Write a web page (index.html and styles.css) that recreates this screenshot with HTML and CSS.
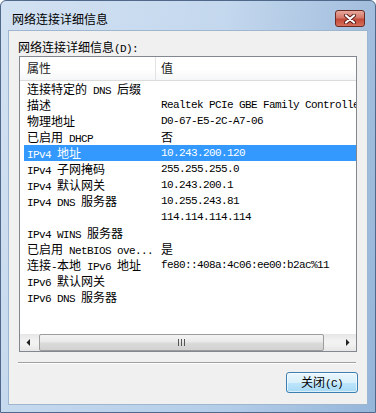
FILE: index.html
```html
<!DOCTYPE html>
<html lang="zh-CN">
<head>
    <meta charset="UTF-8">
    <title>网络连接详细信息</title>
    <link rel="stylesheet" href="styles.css">
</head>
<body>
    <div class="window">
        <div class="titlebar">
            <span class="title">网络连接详细信息</span>
            <button class="close-btn" title="关闭">
                <svg width="14" height="10" viewBox="0 0 14 10">
                    <path d="M3 1.5 L11 8.5 M11 1.5 L3 8.5" stroke="#5a1b15" stroke-width="4" stroke-linecap="round"/>
                    <path d="M3 1.5 L11 8.5 M11 1.5 L3 8.5" stroke="#fff" stroke-width="2.2" stroke-linecap="round"/>
                </svg>
            </button>
        </div>

        <div class="client">
            <div class="label"><span class="zh">网络连接详细信息</span>(D):</div>

            <div class="listbox">
                <div class="list-head">
                    <div class="head-prop"><span class="zh">属性</span></div>
                    <div class="head-val"><span class="zh">值</span></div>
                </div>

                <div class="rows">
                    <div class="row"><div class="prop"><span class="zh">连接特定的</span> DNS <span class="zh">后缀</span></div><div class="val"></div></div>
                    <div class="row"><div class="prop"><span class="zh">描述</span></div><div class="val">Realtek PCIe GBE Family Controller</div></div>
                    <div class="row"><div class="prop"><span class="zh">物理地址</span></div><div class="val">D0-67-E5-2C-A7-06</div></div>
                    <div class="row"><div class="prop"><span class="zh">已启用</span> DHCP</div><div class="val"><span class="zh">否</span></div></div>
                    <div class="row selected"><div class="prop">IPv4 <span class="zh">地址</span></div><div class="val">10.243.200.120</div></div>
                    <div class="row"><div class="prop">IPv4 <span class="zh">子网掩码</span></div><div class="val">255.255.255.0</div></div>
                    <div class="row"><div class="prop">IPv4 <span class="zh">默认网关</span></div><div class="val">10.243.200.1</div></div>
                    <div class="row"><div class="prop">IPv4 DNS <span class="zh">服务器</span></div><div class="val">10.255.243.81</div></div>
                    <div class="row"><div class="prop"></div><div class="val">114.114.114.114</div></div>
                    <div class="row"><div class="prop">IPv4 WINS <span class="zh">服务器</span></div><div class="val"></div></div>
                    <div class="row"><div class="prop"><span class="zh">已启用</span> NetBIOS ove...</div><div class="val"><span class="zh">是</span></div></div>
                    <div class="row"><div class="prop"><span class="zh">连接</span>-<span class="zh">本地</span> IPv6 <span class="zh">地址</span></div><div class="val">fe80::408a:4c06:ee00:b2ac%11</div></div>
                    <div class="row"><div class="prop">IPv6 <span class="zh">默认网关</span></div><div class="val"></div></div>
                    <div class="row"><div class="prop">IPv6 DNS <span class="zh">服务器</span></div><div class="val"></div></div>
                </div>

                <div class="hscroll">
                    <div class="arrow">
                        <svg width="5" height="7" viewBox="0 0 5 7"><polygon points="4,0 4,7 0.5,3.5" fill="#222"/></svg>
                    </div>
                    <div class="thumb">
                        <svg width="7" height="7" viewBox="0 0 7 7">
                            <path d="M0.5 0 V7 M3.5 0 V7 M6.5 0 V7" stroke="#555" stroke-width="1"/>
                        </svg>
                    </div>
                    <div class="track"></div>
                    <div class="arrow">
                        <svg width="5" height="7" viewBox="0 0 5 7"><polygon points="1,0 1,7 4.5,3.5" fill="#222"/></svg>
                    </div>
                </div>
            </div>

            <div class="separator"></div>

            <div class="actions">
                <button class="btn"><span class="zh">关闭</span>(C)</button>
            </div>
        </div>
    </div>
</body>
</html>
```

FILE: styles.css
```css
* {
    box-sizing: border-box;
}

body {
    margin: 0;
    background: #fff;
}

.zh {
    font-family: "Noto Sans CJK SC", sans-serif;
    font-size: 12px;
    letter-spacing: 0;
}

/* window frame */
.window {
    width: 376px;
    height: 413px;
    border: 1px solid #50698a;
    border-radius: 6px 6px 0 0;
    background:
        linear-gradient(to right, rgba(255,255,255,0.25), rgba(255,255,255,0) 60%, rgba(60,110,170,0.25)),
        linear-gradient(to bottom, #c4d8ee, #bdd3eb 50%, #b3cde9);
    padding: 0 7px 7px 7px;
    display: flex;
    flex-direction: column;
}

.titlebar {
    height: 29px;
    display: flex;
    align-items: flex-start;
    justify-content: space-between;
}

.title {
    font-family: "Noto Sans CJK SC", sans-serif;
    font-size: 12px;
    line-height: 16px;
    color: #000;
    padding: 10px 0 0 4px;
}

.close-btn {
    margin: 9px 3px 0 0;
    width: 30px;
    height: 17px;
    padding: 0;
    border: 1px solid #6b2b22;
    border-radius: 3px;
    background: linear-gradient(to bottom, #e8a89c, #d4786a 45%, #c24a38 55%, #d6705c);
    display: flex;
    align-items: center;
    justify-content: center;
}

/* client area */
.client {
    flex: 1;
    background: #f0f0f0;
    border: 1px solid #9fb6cf;
    display: flex;
    flex-direction: column;
}

.label {
    margin: 8px 0 0 9px;
    height: 16px;
    line-height: 16px;
    font-family: "Liberation Mono", monospace;
    font-size: 11px;
    letter-spacing: -0.6px;
    color: #000;
}

.listbox {
    margin: 1px 0 0 10px;
    width: 338px;
    height: 296px;
    border: 1px solid #828790;
    background: #fff;
    display: flex;
    flex-direction: column;
    overflow: hidden;
}

.list-head {
    height: 24px;
    display: flex;
    align-items: stretch;
    border-bottom: 1px solid #dcdcdc;
    background: linear-gradient(to bottom, #fff, #fff 55%, #f5f6f7);
    color: #1a1a1a;
}

.head-prop {
    width: 136px;
    padding: 3px 0 0 7px;
    line-height: 16px;
    border-right: 1px solid #e2e3e4;
}

.head-val {
    padding: 3px 0 0 5px;
    line-height: 16px;
}

.rows {
    flex: 1;
    font-family: "Liberation Mono", monospace;
    font-size: 11px;
    letter-spacing: -0.6px;
    color: #000;
}

.row {
    height: 16px;
    line-height: 16px;
    margin-left: 4px;
    display: flex;
    white-space: nowrap;
}

.row .prop {
    width: 137px;
    flex: none;
    padding-left: 3px;
    overflow: hidden;
}

.row .val {
    flex: none;
}

.row.selected {
    background: #3399ff;
    color: #fff;
}

/* horizontal scroll bar */
.hscroll {
    height: 17px;
    display: flex;
    background: linear-gradient(to bottom, #e6e6e6, #f2f2f2 40%, #f2f2f2 60%, #e6e6e6);
}

.arrow {
    width: 17px;
    display: flex;
    align-items: center;
    justify-content: center;
}

.thumb {
    margin: 0 0 0 2px;
    width: 285px;
    border: 1px solid #9c9c9c;
    border-radius: 2px;
    background: linear-gradient(to bottom, #f4f4f4, #e9e9e9 45%, #dadada 55%, #d2d2d2);
    display: flex;
    align-items: center;
    justify-content: center;
}

.track {
    flex: 1;
}

.separator {
    margin: 10px 0 0 9px;
    width: 338px;
    height: 2px;
    border-top: 1px solid #a0a0a0;
    border-bottom: 1px solid #fff;
}

.actions {
    margin-top: 8px;
    padding-right: 9px;
    display: flex;
    justify-content: flex-end;
}

.btn {
    width: 72px;
    height: 21px;
    padding: 0;
    border: 1px solid #3c7fb1;
    border-radius: 3px;
    background: linear-gradient(to bottom, #eaf6fd, #d9f0fc 50%, #bee6fd 51%, #a7d9f5);
    box-shadow: inset 0 0 0 1px rgba(255,255,255,0.6);
    font-family: "Liberation Mono", monospace;
    font-size: 11px;
    letter-spacing: -0.6px;
    line-height: 16px;
    color: #000;
}
```
